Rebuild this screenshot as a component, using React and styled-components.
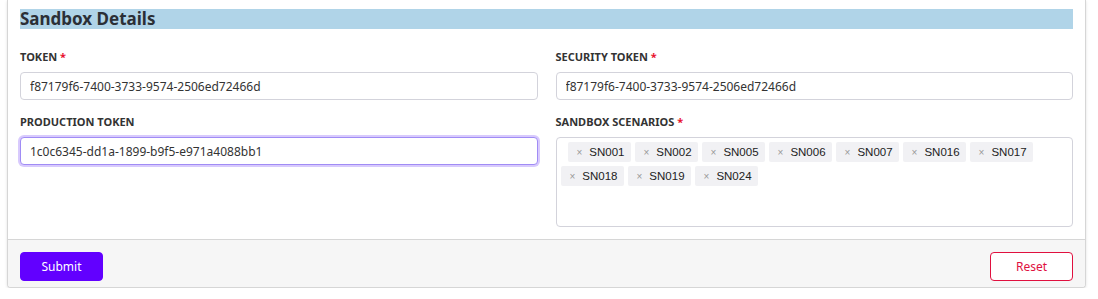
import React from 'react'
import styled, { createGlobalStyle } from 'styled-components'

const GlobalStyle = createGlobalStyle`
    body {
        margin: 0;
        background: #ffffff;
        font-family: "Noto Sans", "Open Sans", sans-serif;
        color: #333333;
    }
    * {
        box-sizing: border-box;
    }
`;

const scenarios = ['SN001', 'SN002', 'SN005', 'SN006', 'SN007', 'SN016', 'SN017', 'SN018', 'SN019', 'SN024']

const App = () => {
    return (
        <Page>
            <GlobalStyle/>
            <Card>
                <Body>
                    <Heading>Sandbox Details</Heading>
                    <FormGrid>
                        <Field>
                            <Label>TOKEN <Required>*</Required></Label>
                            <Input defaultValue='f87179f6-7400-3733-9574-2506ed72466d'/>
                        </Field>
                        <Field>
                            <Label>SECURITY TOKEN <Required>*</Required></Label>
                            <Input defaultValue='f87179f6-7400-3733-9574-2506ed72466d'/>
                        </Field>
                        <Field>
                            <Label>PRODUCTION TOKEN</Label>
                            <Input $focused defaultValue='1c0c6345-dd1a-1899-b9f5-e971a4088bb1'/>
                        </Field>
                        <Field>
                            <Label>SANDBOX SCENARIOS <Required>*</Required></Label>
                            <MultiSelect>
                                {scenarios.map((code) => (
                                    <Chip key={code}>
                                        <ChipRemove>×</ChipRemove>
                                        {code}
                                    </Chip>
                                ))}
                            </MultiSelect>
                        </Field>
                    </FormGrid>
                </Body>
                <Footer>
                    <SubmitButton>Submit</SubmitButton>
                    <ResetButton>Reset</ResetButton>
                </Footer>
            </Card>
        </Page>
    )
}

export default App

const Page = styled.div`
    padding: 0 12px 0 7px;
`;

const Card = styled.section`
    background: #ffffff;
    border: 1px solid #d6d6d6;
    border-top: none;
    border-radius: 0 0 4px 4px;
    box-shadow: 0 1px 3px rgba(0, 0, 0, 0.12);
    overflow: hidden;
`;

const Body = styled.div`
    padding: 9px 12px 12px;
`;

const Heading = styled.h2`
    margin: 0 0 20px;
    height: 20px;
    background: #b0d4e8;
    font-size: 17px;
    line-height: 20px;
    font-weight: 700;
    color: #2b2f36;
`;

const FormGrid = styled.div`
    display: grid;
    grid-template-columns: 1fr 1fr;
    column-gap: 18px;
    row-gap: 14px;
    align-items: start;
`;

const Field = styled.div`
    display: flex;
    flex-direction: column;
    gap: 7px;
`;

const Label = styled.label`
    font-size: 11px;
    line-height: 16px;
    font-weight: 700;
    color: #333333;
`;

const Required = styled.span`
    color: #e8102e;
`;

const Input = styled.input`
    height: 28px;
    width: 100%;
    padding: 0 9px;
    font-family: inherit;
    font-size: 12px;
    color: #333333;
    background: #ffffff;
    border: 1px solid ${(p) => (p.$focused ? '#a08cf5' : '#d3d3db')};
    border-radius: 4px;
    box-shadow: ${(p) => (p.$focused ? '0 0 0 2px #d8cafd' : 'none')};
    outline: none;
`;

const MultiSelect = styled.div`
    height: 90px;
    display: flex;
    flex-wrap: wrap;
    align-content: flex-start;
    gap: 4px;
    padding: 4px 4px;
    border: 1px solid #d3d3db;
    border-radius: 4px;

    & > :first-child {
        margin-left: 7px;
    }
`;

const Chip = styled.span`
    display: inline-flex;
    align-items: center;
    height: 20px;
    padding: 0 6px 0 9px;
    gap: 7px;
    background: #f1f1f4;
    border-radius: 2px;
    font-family: "Liberation Sans", Arial, sans-serif;
    font-size: 11.5px;
    color: #222222;
`;

const ChipRemove = styled.span`
    font-size: 10px;
    color: #999999;
`;

const Footer = styled.div`
    display: flex;
    justify-content: space-between;
    align-items: center;
    padding: 12px 12px 6px;
    background: #f6f6f6;
    border-top: 1px solid #d6d6d6;
`;

const Button = styled.button`
    width: 83px;
    height: 29px;
    border-radius: 4px;
    font-family: inherit;
    font-size: 12px;
    cursor: pointer;
`;

const SubmitButton = styled(Button)`
    background: #6200ff;
    border: 1px solid #6200ff;
    color: #ffffff;
`;

const ResetButton = styled(Button)`
    background: #ffffff;
    border: 1px solid #e0103f;
    color: #e0103f;
`;
